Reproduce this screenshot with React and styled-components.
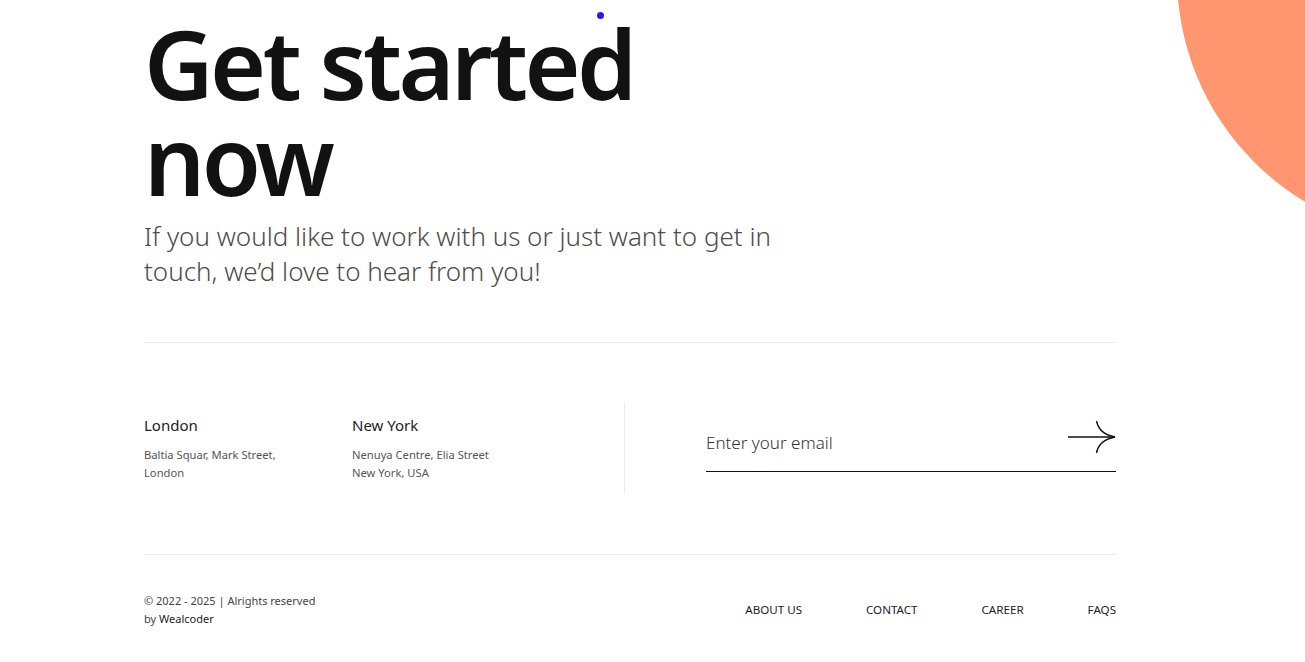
import React from "react";
import styled, { createGlobalStyle } from "styled-components";

const GlobalStyle = createGlobalStyle`
  html, body {
    margin: 0;
    padding: 0;
    background: #fff;
    overflow: hidden;
  }
  body {
    font-family: "Noto Sans", "Open Sans", sans-serif;
    color: #222;
  }
`;

const Page = styled.div`
  position: relative;
  width: 1305px;
  height: 662px;
  overflow: hidden;
  box-sizing: border-box;
  padding: 15px 189px 0 144px;
`;

const Blob = styled.div`
  position: absolute;
  top: -287px;
  right: -398px;
  width: 526px;
  height: 526px;
  border-radius: 50%;
  background: #ff9670;
`;

const Cursor = styled.div`
  position: absolute;
  top: 12px;
  left: 597px;
  width: 7px;
  height: 7px;
  border-radius: 50%;
  background: #3a10f0;
`;

const Title = styled.h1`
  margin: 0;
  font-size: 96px;
  line-height: 96px;
  font-weight: 600;
  letter-spacing: -3.6px;
  color: #121212;
`;

const Lead = styled.p`
  margin: 12px 0 0;
  max-width: 660px;
  font-size: 26px;
  line-height: 35px;
  font-weight: 300;
  color: #4d4d4d;
`;

const Rule = styled.hr`
  margin: ${(p) => p.$top || 0}px 0 0;
  border: 0;
  border-top: 1px solid #ececec;
`;

const Contact = styled.section`
  display: flex;
  padding: 60px 0 61px;
`;

const Offices = styled.div`
  display: flex;
  width: 481px;
  min-height: 90px;
  border-right: 1px solid #ececec;
  box-sizing: border-box;
  padding-top: 11px;
`;

const Office = styled.div`
  width: 208px;
`;

const City = styled.h4`
  margin: 0 0 10px;
  font-size: 15px;
  line-height: 22px;
  font-weight: 400;
  color: #222;
`;

const Address = styled.p`
  margin: 0;
  font-size: 11.2px;
  line-height: 18px;
  color: #555;
`;

const Subscribe = styled.form`
  flex: 1;
  padding: 18px 0 0 81px;
`;

const Field = styled.div`
  display: flex;
  align-items: center;
  height: 51px;
  border-bottom: 1px solid #111;
  box-sizing: border-box;
`;

const Input = styled.input`
  flex: 1;
  border: 0;
  outline: 0;
  padding: 0;
  margin-top: -8px;
  font-family: inherit;
  font-size: 17px;
  font-weight: 300;
  color: #222;
  background: transparent;
  &::placeholder {
    color: #333;
  }
`;

const Send = styled.button`
  border: 0;
  background: none;
  padding: 0;
  margin-top: -18px;
  cursor: pointer;
  display: flex;
`;

const Footer = styled.footer`
  display: flex;
  align-items: center;
  justify-content: space-between;
  padding-top: 37px;
`;

const Copy = styled.div`
  font-size: 11px;
  line-height: 18px;
  color: #444;
  b {
    font-weight: 400;
    color: #222;
  }
`;

const Nav = styled.nav`
  display: flex;
  gap: 64px;
`;

const NavLink = styled.a`
  font-size: 11.6px;
  line-height: 18px;
  color: #222;
  text-decoration: none;
  text-transform: uppercase;
`;

const Arrow = () => (
  <svg width="48" height="34" viewBox="0 0 48 34" fill="none">
    <path d="M0 17H47" stroke="#111" strokeWidth="1.4" />
    <path
      d="M28.5 1Q31 14 47 17Q31 20 28.5 33"
      stroke="#111"
      strokeWidth="1.4"
    />
  </svg>
);

export default function App() {
  return (
    <>
      <GlobalStyle />
      <Page>
        <Blob />
        <Cursor />
        <Title>
          Get started
          <br />
          now
        </Title>
        <Lead>
          If you would like to work with us or just want to get in touch,
          we’d love to hear from you!
        </Lead>
        <Rule $top={53} />
        <Contact>
          <Offices>
            <Office>
              <City>London</City>
              <Address>
                Baltia Squar, Mark Street,
                <br />
                London
              </Address>
            </Office>
            <Office>
              <City>New York</City>
              <Address>
                Nenuya Centre, Elia Street
                <br />
                New York, USA
              </Address>
            </Office>
          </Offices>
          <Subscribe onSubmit={(e) => e.preventDefault()}>
            <Field>
              <Input type="email" placeholder="Enter your email" />
              <Send type="submit" aria-label="Subscribe">
                <Arrow />
              </Send>
            </Field>
          </Subscribe>
        </Contact>
        <Rule />
        <Footer>
          <Copy>
            © 2022 - 2025 | Alrights reserved
            <br />
            by <b>Wealcoder</b>
          </Copy>
          <Nav>
            {["About us", "Contact", "Career", "FAQs"].map((l) => (
              <NavLink key={l} href="#">
                {l}
              </NavLink>
            ))}
          </Nav>
        </Footer>
      </Page>
    </>
  );
}
